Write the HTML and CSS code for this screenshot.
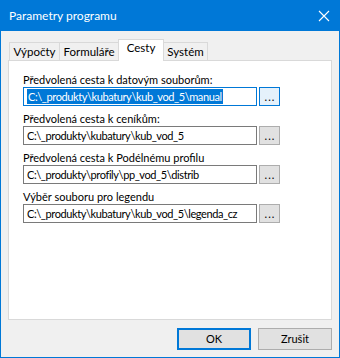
FILE: index.html
```html
<!DOCTYPE html>
<html lang="cs">
<head>
<meta charset="utf-8">
<title>Parametry programu</title>
<link rel="stylesheet" href="styles.css">
</head>
<body>
<div class="window">
  <div class="titlebar">
    <span class="title">Parametry programu</span>
    <svg class="close" width="12" height="12" viewBox="0 0 12 12"><path d="M1 1 L11 11 M11 1 L1 11" stroke="#fff" stroke-width="1.1" fill="none"/></svg>
  </div>
  <div class="client">
    <div class="tabs">
      <div class="tab t1">Výpočty</div>
      <div class="tab t2">Formuláře</div>
      <div class="tab t3 active">Cesty</div>
      <div class="tab t4">Systém</div>
    </div>
    <div class="panel">
      <div class="field">
        <div class="label">Předvolená cesta k datovým souborům:</div>
        <div class="row">
          <div class="input focus"><span class="sel">C:\_produkty\kubatury\kub_vod_5\manual</span></div>
          <div class="browse hot">...</div>
        </div>
      </div>
      <div class="field">
        <div class="label">Předvolená cesta k ceníkům:</div>
        <div class="row">
          <div class="input">C:\_produkty\kubatury\kub_vod_5</div>
          <div class="browse">...</div>
        </div>
      </div>
      <div class="field">
        <div class="label">Předvolená cesta k Podélnému profilu</div>
        <div class="row">
          <div class="input">C:\_produkty\profily\pp_vod_5\distrib</div>
          <div class="browse">...</div>
        </div>
      </div>
      <div class="field">
        <div class="label">Výběr souboru pro legendu</div>
        <div class="row">
          <div class="input">C:\_produkty\kubatury\kub_vod_5\legenda_cz</div>
          <div class="browse">...</div>
        </div>
      </div>
    </div>
    <div class="buttons">
      <div class="btn default">OK</div>
      <div class="btn">Zrušit</div>
    </div>
  </div>
</div>
</body>
</html>
```
FILE: styles.css
```css
* { box-sizing: border-box; }
body {
  margin: 0;
  font-family: Lato, "Noto Sans", sans-serif;
  font-size: 11px;
  color: #000;
}
.window {
  width: 340px;
  height: 358px;
  display: flex;
  flex-direction: column;
  background: #f0f0f0;
}
.titlebar {
  height: 31px;
  flex: none;
  background: #0078d7;
  color: #fff;
  display: flex;
  align-items: center;
  justify-content: space-between;
  padding: 0 10px 0 9px;
}
.title { font-size: 12px; }
.close { display: block; }
.client {
  flex: 1;
  border: 1px solid #0078d7;
  border-top: 0;
  padding: 8px 7px 7px 7px;
  display: flex;
  flex-direction: column;
}
.tabs {
  display: flex;
  align-items: flex-end;
  height: 22px;
  margin-bottom: -1px;
  padding-left: 1px;
  position: relative;
  z-index: 1;
}
.tab {
  height: 19px;
  border: 1px solid #d9d9d9;
  background: #f0f0f0;
  text-align: center;
  line-height: 17px;
  margin-left: -1px;
  font-size: 11.5px;
}
.tab.t1 { margin-left: 0; width: 51px; }
.tab.t2 { width: 60px; }
.tab.t3 { width: 46px; }
.tab.t4 { width: 45px; }
.tab.active {
  height: 22px;
  background: #fff;
  border-bottom: 0;
  position: relative;
  z-index: 2;
  line-height: 16px;
}
.panel {
  height: 260px;
  flex: none;
  background: #fff;
  border: 1px solid #d9d9d9;
  padding: 11px 0 0 14px;
}
.field { margin-bottom: 5px; }
.label {
  line-height: 15px;
  height: 15px;
  white-space: nowrap;
}
.row {
  display: flex;
  gap: 2px;
}
.input {
  width: 234px;
  height: 19px;
  border: 1px solid #7a7a7a;
  background: #fff;
  padding-left: 3px;
  line-height: 17px;
  white-space: nowrap;
  overflow: hidden;
  letter-spacing: -0.4px;
}
.input.focus { border-color: #0078d7; }
.sel {
  background: #0078d7;
  color: #fff;
  padding: 1px 1px;
}
.browse {
  width: 21px;
  height: 19px;
  border: 1px solid #adadad;
  background: #e1e1e1;
  text-align: center;
  line-height: 17px;
  letter-spacing: 1px;
  padding-left: 1px;
}
.browse.hot {
  border-color: #0078d7;
  background: #e5f1fb;
}
.buttons {
  display: flex;
  justify-content: flex-end;
  gap: 7px;
  margin-top: 8px;
}
.btn {
  width: 74px;
  height: 22px;
  border: 1px solid #adadad;
  background: #e1e1e1;
  text-align: center;
  line-height: 20px;
}
.btn.default {
  border-color: #0078d7;
  box-shadow: inset 0 0 0 1px #0078d7;
}
```
